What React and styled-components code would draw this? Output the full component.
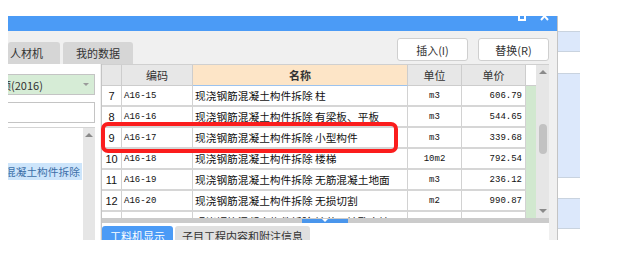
import styled, { createGlobalStyle } from 'styled-components'

const GlobalStyle = createGlobalStyle`
  html, body {
    margin: 0;
    padding: 0;
    background: #ffffff;
  }
  body {
    font-family: "Noto Sans CJK SC", "Liberation Sans", sans-serif;
    color: #333;
  }
`

const CJK = `"Noto Sans CJK SC", "Liberation Sans", sans-serif`
const MONO = `"Liberation Mono", "DejaVu Sans Mono", monospace`

const Page = styled.div`
  width: 622px;
  height: 256px;
  overflow: hidden;
  padding-top: 16px;
  box-sizing: border-box;
`

const Stage = styled.div`
  display: flex;
  height: 224px;
  padding-left: 8px;
`

const Dialog = styled.div`
  width: 549px;
  height: 224px;
  background: #f0f0f0;
  border-right: 1px solid #c4c4c4;
  display: flex;
  flex-direction: column;
`

const TitleBar = styled.div`
  height: 15px;
  background: #4b9bf6;
  display: flex;
  justify-content: flex-end;
  align-items: flex-start;
  gap: 14px;
  padding-right: 8px;
  overflow: hidden;
`

const MaxIcon = styled.div`
  width: 8px;
  height: 10px;
  margin-top: -5px;
  border: 2px solid #ffffff;
  border-top-width: 3px;
  box-sizing: border-box;
`

const CloseIcon = styled.svg`
  margin-top: -5px;
  display: block;
`

const Toolbar = styled.div`
  height: 33px;
  display: flex;
  justify-content: space-between;
  padding-right: 8px;
`

const TabStrip = styled.div`
  display: flex;
  gap: 3px;
  align-self: flex-end;
`

const Tab = styled.div`
  width: ${p => p.$w}px;
  height: 22px;
  background: #d6d6d6;
  border-radius: 3px 3px 0 0;
  font-size: 11px;
  line-height: 22px;
  color: #333;
  text-align: ${p => (p.$left ? 'left' : 'center')};
  padding-left: ${p => (p.$left ? '2px' : '0')};
  box-sizing: border-box;
`

const ButtonGroup = styled.div`
  display: flex;
  gap: 10px;
  margin-top: 7px;
  align-self: flex-start;
`

const ActionButton = styled.button`
  width: 71px;
  height: 23px;
  background: #ffffff;
  border: 1px solid #cfcfcf;
  border-radius: 3px;
  font-family: ${CJK};
  font-size: 11px;
  color: #333;
  padding: 0;
`

const Main = styled.div`
  flex: 1;
  display: flex;
  gap: 1px;
  min-height: 0;
`

const LeftPanel = styled.div`
  width: 92px;
  background: #ffffff;
  display: flex;
  flex-direction: column;
  padding-top: 10px;
  box-sizing: border-box;
`

const Select = styled.div`
  width: 87px;
  height: 21px;
  background: #d6ecd6;
  border: 1px solid #c4c4c4;
  border-left: none;
  box-sizing: border-box;
  display: flex;
  align-items: center;
  justify-content: space-between;
  padding-right: 5px;
  font-size: 11px;
  color: #333;
  overflow: hidden;
  white-space: nowrap;
`

const ClippedText = styled.span`
  margin-left: ${p => p.$shift}px;
`

const SelectArrow = styled.span`
  width: 0;
  height: 0;
  border-left: 3px solid transparent;
  border-right: 3px solid transparent;
  border-top: 3px solid #9a9a9a;
`

const SearchBox = styled.div`
  width: 87px;
  height: 21px;
  margin-top: 7px;
  background: #ffffff;
  border: 1px solid #c4c4c4;
  border-left: none;
  box-sizing: border-box;
`

const Tree = styled.div`
  flex: 1;
  margin-top: 4px;
  width: 87px;
  border-top: 1px solid #d4d4d4;
  display: flex;
`

const TreeList = styled.div`
  flex: 1;
  padding-top: 35px;
  overflow: hidden;
`

const TreeItem = styled.div`
  height: 17px;
  width: 74px;
  background: ${p => (p.$selected ? '#cde5fb' : 'transparent')};
  color: ${p => (p.$selected ? '#3c6fa8' : '#333')};
  font-size: 10.7px;
  line-height: 17px;
  white-space: nowrap;
  overflow: hidden;
`

const VScroll = styled.div`
  width: ${p => p.$w}px;
  background: #e6e6e6;
  display: flex;
  flex-direction: column;
  align-items: center;
  padding: 5px 0;
  box-sizing: border-box;
`

const ScrollArrow = styled.span`
  width: 0;
  height: 0;
  border-left: 4px solid transparent;
  border-right: 4px solid transparent;
  ${p =>
    p.$down
      ? 'border-top: 4px solid #8a8a8a; margin-top: auto;'
      : 'border-bottom: 4px solid #8a8a8a;'}
`

const ScrollThumb = styled.div`
  width: 8px;
  height: 30px;
  margin-top: ${p => p.$top}px;
  background: #c2c2c2;
  border-radius: 4px;
`

const TablePanel = styled.div`
  width: 448px;
  position: relative;
  display: flex;
  flex-direction: column;
  border-left: 1px solid #c4c4c4;
  box-sizing: border-box;
  background: #ffffff;
`

const GridArea = styled.div`
  height: 154px;
  display: flex;
  border-top: 1px solid #d0d0d0;
  box-sizing: border-box;
`

const Grid = styled.div`
  flex: 1;
  display: grid;
  grid-template-columns: 20px 71px 215px 54px 64px 10px;
  grid-auto-rows: 21px;
  overflow: hidden;
  align-content: start;
`

const HeaderCell = styled.div`
  background: ${p => (p.$peach ? '#fde5c7' : p.$blank ? '#ffffff' : '#e7e7e7')};
  border-right: ${p => (p.$blank ? 'none' : '1px solid #cdcdcd')};
  border-bottom: 1px solid ${p => (p.$peach ? '#9cc3ee' : '#cdcdcd')};
  box-sizing: border-box;
  font-size: 11px;
  font-weight: ${p => (p.$peach ? 700 : 400)};
  color: #333;
  display: flex;
  align-items: center;
  justify-content: center;
`

const Cell = styled.div`
  border-right: 1px solid #d2d2d2;
  border-bottom: 2px solid #d6d6d6;
  box-sizing: border-box;
  display: flex;
  align-items: center;
  justify-content: ${p => p.$align || 'flex-start'};
  padding: ${p => p.$pad || '0 0 0 2px'};
  font-family: ${p => (p.$mono ? MONO : CJK)};
  font-size: ${p => (p.$mono ? '9px' : '10.7px')};
  color: #111;
  white-space: nowrap;
  overflow: hidden;
`

const NumCell = styled(Cell)`
  font-family: "Liberation Sans", sans-serif;
  font-size: 11px;
  justify-content: center;
  padding: 0;
`

const GreenCell = styled.div`
  background: #d1e8cf;
`

const HScroll = styled.div`
  height: 5px;
  background: #cbcbcb;
  display: flex;
  align-items: flex-end;
  padding-left: 200px;
`

const HThumb = styled.div`
  width: 46px;
  height: 4px;
  background: #4a96ec;
  display: flex;
  justify-content: center;
`

const ThumbMark = styled.span`
  width: 0;
  height: 0;
  border-left: 3px solid transparent;
  border-right: 3px solid transparent;
  border-top: 3px solid #ffffff;
`

const BottomTabs = styled.div`
  flex: 1;
  display: flex;
  gap: 2px;
  padding-top: 3px;
  overflow: hidden;
`

const BottomTab = styled.div`
  width: ${p => p.$w}px;
  height: 22px;
  background: ${p => (p.$active ? '#4b9bf6' : '#e0e0e0')};
  color: ${p => (p.$active ? '#ffffff' : '#333')};
  border-radius: 3px 3px 0 0;
  font-size: 11px;
  line-height: 13px;
  padding-top: 4px;
  text-align: center;
  box-sizing: border-box;
  white-space: nowrap;
`

const Highlight = styled.div`
  position: absolute;
  left: -1px;
  top: 58px;
  width: 297px;
  height: 31px;
  border: 4px solid #fb1d1d;
  border-radius: 7px;
  box-sizing: border-box;
  pointer-events: none;
`

const Backdrop = styled.div`
  width: 22px;
  display: flex;
  flex-direction: column;
`

const Stripe = styled.div`
  height: ${p => p.$h}px;
  background: ${p => (p.$blue ? '#dce8fb' : '#ffffff')};
  border-top: ${p => (p.$blue ? '1px solid #c9d3df' : 'none')};
  border-bottom: ${p => (p.$blue ? '1px solid #c9d3df' : 'none')};
  box-sizing: border-box;
`

const rows = [
  { no: '7', code: 'A16-15', name: '现浇钢筋混凝土构件拆除 柱', unit: 'm3', price: '606.79' },
  { no: '8', code: 'A16-16', name: '现浇钢筋混凝土构件拆除 有梁板、平板', unit: 'm3', price: '544.65' },
  { no: '9', code: 'A16-17', name: '现浇钢筋混凝土构件拆除 小型构件', unit: 'm3', price: '339.68' },
  { no: '10', code: 'A16-18', name: '现浇钢筋混凝土构件拆除 楼梯', unit: '10m2', price: '792.54' },
  { no: '11', code: 'A16-19', name: '现浇钢筋混凝土构件拆除 无筋混凝土地面', unit: 'm3', price: '236.12' },
  { no: '12', code: 'A16-20', name: '现浇钢筋混凝土构件拆除 无损切割', unit: 'm2', price: '990.87' },
  { no: '', code: '', name: '现浇钢筋混凝土构件拆除 钻芯、钻孔穿墙', unit: '', price: '' },
]

const stripes = [
  { h: 15 }, { h: 21, blue: true }, { h: 21 }, { h: 105, blue: true },
  { h: 20 }, { h: 31, blue: true }, { h: 11 },
]

function App() {
  return (
    <Page>
      <GlobalStyle />
      <Stage>
        <Dialog>
          <TitleBar>
            <MaxIcon />
            <CloseIcon width="9" height="10" viewBox="0 0 9 10">
              <path d="M1 1 L8 9 M8 1 L1 9" stroke="#ffffff" strokeWidth="2" />
            </CloseIcon>
          </TitleBar>
          <Toolbar>
            <TabStrip>
              <Tab $w={52} $left>人材机</Tab>
              <Tab $w={70}>我的数据</Tab>
            </TabStrip>
            <ButtonGroup>
              <ActionButton>插入(I)</ActionButton>
              <ActionButton>替换(R)</ActionButton>
            </ButtonGroup>
          </Toolbar>
          <Main>
            <LeftPanel>
              <Select>
                <ClippedText $shift={-8}>额(2016)</ClippedText>
                <SelectArrow />
              </Select>
              <SearchBox />
              <Tree>
                <TreeList>
                  <TreeItem $selected>
                    <ClippedText $shift={-3}>混凝土构件拆除</ClippedText>
                  </TreeItem>
                </TreeList>
                <VScroll $w={12}>
                  <ScrollArrow />
                </VScroll>
              </Tree>
            </LeftPanel>
            <TablePanel>
              <GridArea>
                <Grid>
                  <HeaderCell />
                  <HeaderCell>编码</HeaderCell>
                  <HeaderCell $peach>名称</HeaderCell>
                  <HeaderCell>单位</HeaderCell>
                  <HeaderCell>单价</HeaderCell>
                  <HeaderCell $blank />
                  {rows.map((r, i) => [
                    <NumCell key={`n${i}`}>{r.no}</NumCell>,
                    <Cell key={`c${i}`} $mono>{r.code}</Cell>,
                    <Cell key={`m${i}`}>{r.name}</Cell>,
                    <Cell key={`u${i}`} $mono $align="center" $pad="0">{r.unit}</Cell>,
                    <Cell key={`p${i}`} $mono $align="flex-end" $pad="0 3px 0 0">{r.price}</Cell>,
                    <GreenCell key={`g${i}`} />,
                  ])}
                </Grid>
                <VScroll $w={13}>
                  <ScrollArrow />
                  <ScrollThumb $top={50} />
                  <ScrollArrow $down />
                </VScroll>
              </GridArea>
              <HScroll>
                <HThumb>
                  <ThumbMark />
                </HThumb>
              </HScroll>
              <BottomTabs>
                <BottomTab $w={71} $active>工料机显示</BottomTab>
                <BottomTab $w={135}>子目工程内容和附注信息</BottomTab>
              </BottomTabs>
              <Highlight />
            </TablePanel>
          </Main>
        </Dialog>
        <Backdrop>
          {stripes.map((s, i) => (
            <Stripe key={i} $h={s.h} $blue={s.blue} />
          ))}
        </Backdrop>
      </Stage>
    </Page>
  )
}

export default App
